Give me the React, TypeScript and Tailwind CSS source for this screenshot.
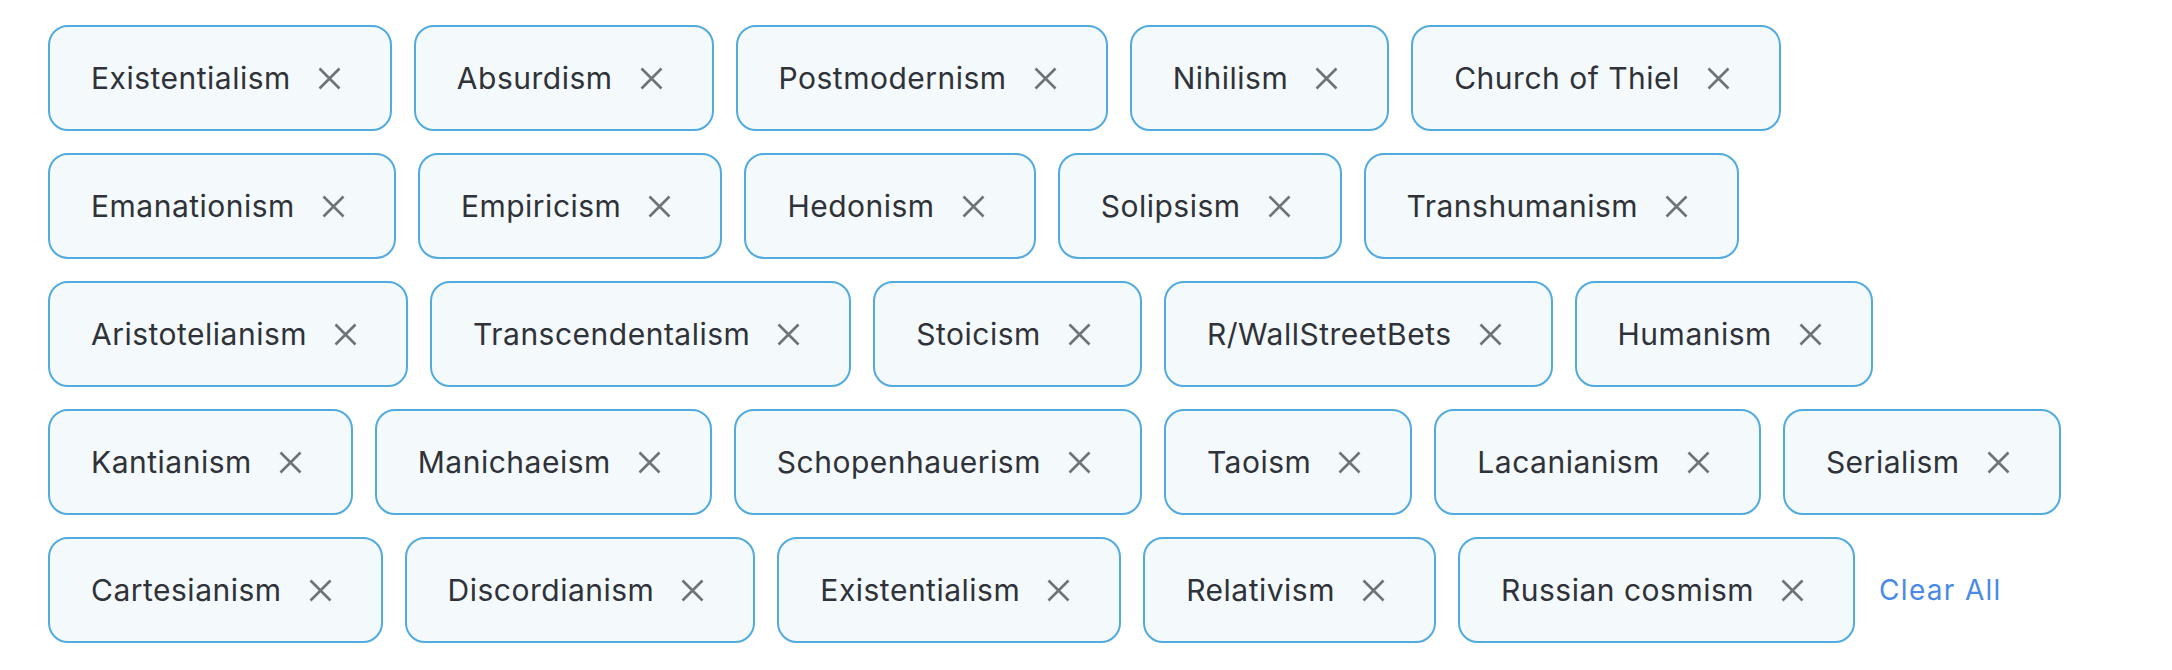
import React from "react";

const tags = [
  "Existentialism",
  "Absurdism",
  "Postmodernism",
  "Nihilism",
  "Church of Thiel",
  "Emanationism",
  "Empiricism",
  "Hedonism",
  "Solipsism",
  "Transhumanism",
  "Aristotelianism",
  "Transcendentalism",
  "Stoicism",
  "R/WallStreetBets",
  "Humanism",
  "Kantianism",
  "Manichaeism",
  "Schopenhauerism",
  "Taoism",
  "Lacanianism",
  "Serialism",
  "Cartesianism",
  "Discordianism",
  "Existentialism",
  "Relativism",
  "Russian cosmism",
];

function XIcon() {
  return (
    <svg width="23" height="23" viewBox="0 0 23 23" fill="none" className="shrink-0">
      <path d="M1.5 1.5 L21.5 21.5 M21.5 1.5 L1.5 21.5" stroke="#6e7279" strokeWidth="2.6" />
    </svg>
  );
}

function Chip({ label }: { label: string }) {
  return (
    <div className="flex h-[106px] items-center rounded-[20px] border-2 border-[#52abdf] bg-[#f4f9fc] pl-[41px] pr-[49px]">
      <span className="text-[30px] leading-none tracking-[0.5px] text-[#2f3238]">{label}</span>
      <span className="ml-[27px] flex items-center">
        <XIcon />
      </span>
    </div>
  );
}

export default function App() {
  return (
    <div
      className="min-h-[670px] w-full bg-white pl-[48px] pt-[25px]"
      style={{ fontFamily: "Inter, 'Noto Sans', sans-serif" }}
    >
      <div className="flex w-[2062px] flex-wrap items-center gap-[22px]">
        {tags.map((t, i) => (
          <Chip key={i} label={t} />
        ))}
        <button className="ml-[2px] text-[28px] font-normal leading-none tracking-[1.3px] text-[#4a8ae6]">
          Clear All
        </button>
      </div>
    </div>
  );
}
